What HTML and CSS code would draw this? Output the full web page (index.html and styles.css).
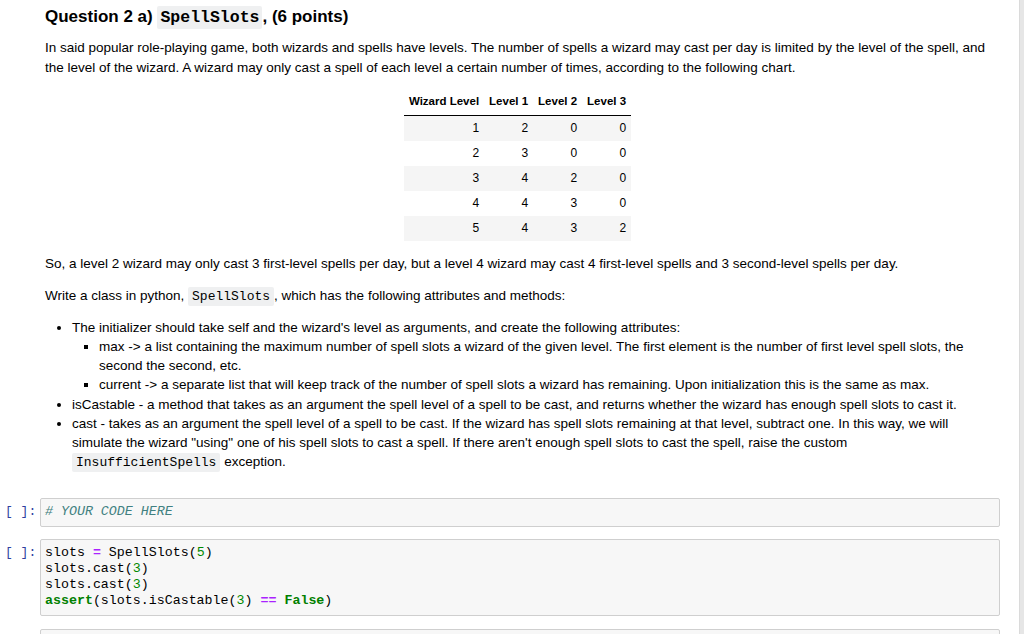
FILE: index.html
```html
<!DOCTYPE html>
<html>
<head>
<meta charset="utf-8">
<link rel="stylesheet" href="styles.css">
</head>
<body>
<div class="page">
  <div class="nb">
    <div class="cell">
      <div class="prompt"></div>
      <div class="md">
        <h2 class="title">Question 2 a) <code class="hcode">SpellSlots</code>, (6 points)</h2>
        <p class="intro">In said popular role-playing game, both wizards and spells have levels. The number of spells a wizard may cast per day is limited by the level of the spell, and the level of the wizard. A wizard may only cast a spell of each level a certain number of times, according to the following chart.</p>
        <table class="chart">
          <thead>
            <tr><th>Wizard Level</th><th>Level 1</th><th>Level 2</th><th>Level 3</th></tr>
          </thead>
          <tbody>
            <tr><td>1</td><td>2</td><td>0</td><td>0</td></tr>
            <tr><td>2</td><td>3</td><td>0</td><td>0</td></tr>
            <tr><td>3</td><td>4</td><td>2</td><td>0</td></tr>
            <tr><td>4</td><td>4</td><td>3</td><td>0</td></tr>
            <tr><td>5</td><td>4</td><td>3</td><td>2</td></tr>
          </tbody>
        </table>
        <p class="so">So, a level 2 wizard may only cast 3 first-level spells per day, but a level 4 wizard may cast 4 first-level spells and 3 second-level spells per day.</p>
        <p class="write">Write a class in python, <code class="icode">SpellSlots</code>, which has the following attributes and methods:</p>
        <ul class="list">
          <li>The initializer should take self and the wizard's level as arguments, and create the following attributes:
            <ul class="sub">
              <li>max -&gt; a list containing the maximum number of spell slots a wizard of the given level. The first element is the number of first level spell slots, the second the second, etc.</li>
              <li>current -&gt; a separate list that will keep track of the number of spell slots a wizard has remaining. Upon initialization this is the same as max.</li>
            </ul>
          </li>
          <li>isCastable - a method that takes as an argument the spell level of a spell to be cast, and returns whether the wizard has enough spell slots to cast it.</li>
          <li>cast - takes as an argument the spell level of a spell to be cast. If the wizard has spell slots remaining at that level, subtract one. In this way, we will simulate the wizard "using" one of his spell slots to cast a spell. If there aren't enough spell slots to cast the spell, raise the custom <code class="icode">InsufficientSpells</code> exception.</li>
        </ul>
      </div>
    </div>

    <div class="cell codecell first">
      <div class="prompt code-prompt">[ ]:</div>
      <pre class="input"><span class="c">#&nbsp;YOUR CODE HERE</span></pre>
    </div>

    <div class="cell codecell">
      <div class="prompt code-prompt">[ ]:</div>
      <pre class="input">slots <span class="o">=</span> SpellSlots(<span class="m">5</span>)
slots.cast(<span class="m">3</span>)
slots.cast(<span class="m">3</span>)
<span class="k">assert</span>(slots.isCastable(<span class="m">3</span>) <span class="o">==</span> <span class="k">False</span>)</pre>
    </div>

    <div class="cell codecell last">
      <div class="prompt code-prompt"></div>
      <pre class="input"> </pre>
    </div>
  </div>
  <div class="rail"></div>
</div>
</body>
</html>
```

FILE: styles.css
```css
html, body {
  margin: 0;
  padding: 0;
  background: #ffffff;
  height: 100%;
  overflow: hidden;
}

body {
  font-family: "Liberation Sans", Arial, sans-serif;
  font-size: 13.5px;
  color: #000;
}

.page {
  display: flex;
  height: 634px;
}

.nb {
  width: 1000px;
  flex: none;
  padding-top: 7px;
}

.rail {
  margin-left: 19px;
  flex: 1;
  background: #e6e6e6;
  border-left: 1px solid #dadada;
}

.cell {
  display: flex;
}

.prompt {
  width: 40px;
  flex: none;
}

.md {
  flex: 1;
  padding: 0 10px 0 5px;
}

.title {
  margin: 0;
  font-size: 17px;
  line-height: 20px;
  font-weight: bold;
}

.hcode {
  font-family: "Liberation Mono", "Courier New", monospace;
  font-size: 16.5px;
  font-weight: bold;
  background: #eff0f1;
  padding: 2px 3px;
  border-radius: 2px;
}

.intro {
  margin: 10px 0 0;
  line-height: 20px;
}

.chart {
  margin: 13px auto 0;
  border-collapse: collapse;
}

.chart th {
  font-size: 11.5px;
  font-weight: bold;
  line-height: 14px;
  padding: 3px 5px 7px;
  text-align: right;
  border-bottom: 1px solid #000;
  white-space: nowrap;
}

.chart th:first-child {
  padding-left: 5px;
}

.chart td {
  font-size: 12px;
  line-height: 15px;
  height: 15px;
  padding: 5px 5px;
  text-align: right;
}

.chart tbody tr:nth-child(odd) {
  background: #f5f5f5;
}

.so {
  margin: 13px 0 0;
  line-height: 20px;
}

.write {
  margin: 12px 0 0;
  line-height: 20px;
}

.icode {
  font-family: "Liberation Mono", "Courier New", monospace;
  font-size: 13px;
  background: #eff0f1;
  padding: 2px 4px;
  border-radius: 2px;
}

.list {
  margin: 11px 0 0;
  padding-left: 27px;
  line-height: 19.15px;
  list-style: disc;
}

.sub {
  margin: 0;
  padding-left: 27px;
  list-style: square;
}

.codecell {
  margin-top: 12px;
}

.codecell.first {
  margin-top: 26px;
}

.codecell.last {
  margin-top: 13px;
}

.code-prompt {
  font-family: "Liberation Mono", "Courier New", monospace;
  font-size: 13px;
  line-height: 16.25px;
  color: #303f9f;
  padding-top: 6px;
  padding-left: 5px;
  box-sizing: border-box;
  white-space: pre;
}

.input {
  flex: 1;
  margin: 0;
  background: #f7f7f7;
  border: 1px solid #cfcfcf;
  border-radius: 2px;
  padding: 5px 4px;
  font-family: "Liberation Mono", "Courier New", monospace;
  font-size: 13.3px;
  line-height: 16.25px;
  color: #000;
}

.c {
  color: #408080;
  font-style: italic;
}

.o {
  color: #aa22ff;
  font-weight: bold;
}

.m {
  color: #008800;
}

.k {
  color: #008000;
  font-weight: bold;
}
```
